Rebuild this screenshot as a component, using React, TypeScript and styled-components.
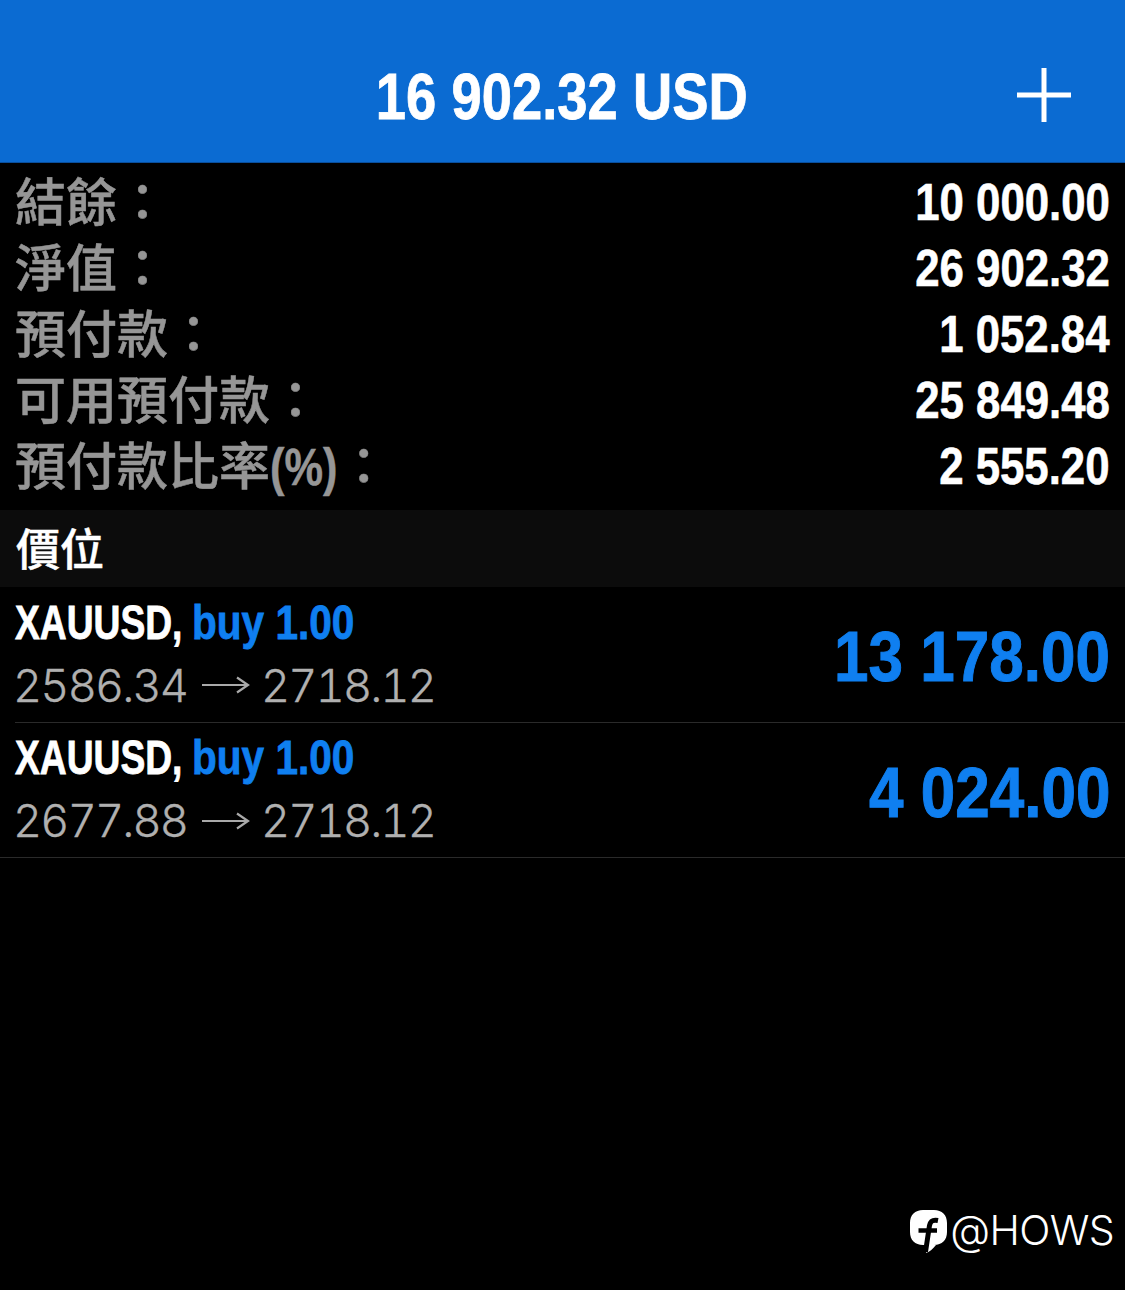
import styled, { createGlobalStyle } from "styled-components";

const GlobalStyle = createGlobalStyle`
    html, body {
        margin: 0;
        padding: 0;
        background: #000000;
    }
`;

const LATIN = `"Liberation Sans", Arial, sans-serif`;
const CJK = `"Noto Sans CJK TC", "Liberation Sans", sans-serif`;
const LIGHT = `Inter, "Liberation Sans", sans-serif`;

const stats = [
    { label: "結餘：", value: "10 000.00" },
    { label: "淨值：", value: "26 902.32" },
    { label: "預付款：", value: "1 052.84" },
    { label: "可用預付款：", value: "25 849.48" },
    { label: "預付款比率", suffix: "(%)", tail: "：", value: "2 555.20" },
];

const positions = [
    { open: "2586.34", close: "2718.12", profit: "13 178.00", flush: false },
    { open: "2677.88", close: "2718.12", profit: "4 024.00", flush: true },
];

const PlusIcon = () => (
    <svg width="56" height="56" viewBox="0 0 56 56" fill="none">
        <path d="M28 1V55M1 28H55" stroke="#FFFFFF" strokeWidth="5" />
    </svg>
);

const FacebookBubble = () => (
    <svg width="40" height="46" viewBox="0 0 40 46" fill="none">
        <path
            d="M14 1H25C33 1 38 6 38 14V23C38 31 33 36 25 36H27C24 40 20 43 17 44L18.5 36H14C6 36 1 31 1 23V14C1 6 6 1 14 1Z"
            fill="#FFFFFF"
        />
        <path d="M29 11.5C24 10.5 21.5 12 20.5 16.5L16.5 43" stroke="#000000" strokeWidth="5" />
        <path d="M9.5 21.5H28" stroke="#000000" strokeWidth="4.5" />
    </svg>
);

export default function App() {
    return (
        <>
            <GlobalStyle />
            <Page>
                <Header>
                    <Title>16 902.32 USD</Title>
                    <AddButton>
                        <PlusIcon />
                    </AddButton>
                </Header>
                <Stats>
                    {stats.map((s) => (
                        <StatRow key={s.value}>
                            <StatLabel>
                                {s.label}
                                {s.suffix && <Percent>{s.suffix}</Percent>}
                                {s.tail}
                            </StatLabel>
                            <StatValue>{s.value}</StatValue>
                        </StatRow>
                    ))}
                </Stats>
                <SectionHead>價位</SectionHead>
                {positions.map((p) => (
                    <PositionRow key={p.open} $flush={p.flush}>
                        <PositionInfo>
                            <PositionTitle>
                                <Symbol>XAUUSD,</Symbol>
                                <Side>buy 1.00</Side>
                            </PositionTitle>
                            <Prices>
                                <PriceText>{p.open}</PriceText>
                                <Arrow viewBox="0 0 48 20" width="48" height="20" fill="none">
                                    <path d="M0 10H46M35 2.5L46 10L35 17.5" stroke="#A9A9A9" strokeWidth="2.2" />
                                </Arrow>
                                <PriceText>{p.close}</PriceText>
                            </Prices>
                        </PositionInfo>
                        <Profit>{p.profit}</Profit>
                    </PositionRow>
                ))}
                <Watermark>
                    <FacebookBubble />
                    <Handle>@HOWS</Handle>
                </Watermark>
            </Page>
        </>
    );
}

const Page = styled.div`
    position: relative;
    width: 1125px;
    height: 1290px;
    overflow: hidden;
    background: #000000;
`;

const Header = styled.div`
    position: relative;
    display: flex;
    align-items: center;
    justify-content: center;
    box-sizing: border-box;
    height: 163px;
    padding: 32px 2px 0 0;
    background: #0b6bd2;
    border-bottom: 1px solid #0a4f9c;
`;

const Title = styled.div`
    font-family: ${LATIN};
    font-size: 64px;
    font-weight: 700;
    line-height: 64px;
    color: #ffffff;
    white-space: nowrap;
    transform: scaleX(0.85);
    -webkit-text-stroke: 0.8px #ffffff;
`;

const AddButton = styled.div`
    position: absolute;
    top: 67px;
    left: 1016px;
    display: flex;
`;

const Stats = styled.div`
    display: flex;
    flex-direction: column;
    height: 340px;
    padding: 7px 15px 0 15px;
`;

const StatRow = styled.div`
    display: flex;
    justify-content: space-between;
    align-items: flex-start;
    height: 66px;
`;

const StatLabel = styled.div`
    height: 56px;
    margin-top: 1px;
    font-family: ${CJK};
    font-size: 51px;
    font-weight: 500;
    line-height: 56px;
    color: #969696;
    white-space: nowrap;
    -webkit-text-stroke: 0.5px #969696;
`;

const Percent = styled.span`
    display: inline-block;
    font-family: ${LATIN};
    font-weight: 700;
    margin-right: -11px;
    transform: scaleX(0.85);
    transform-origin: left center;
`;

const StatValue = styled.div`
    font-family: ${LATIN};
    font-size: 51px;
    font-weight: 700;
    line-height: 66px;
    color: #ffffff;
    white-space: nowrap;
    transform: scaleX(0.858);
    transform-origin: right center;
    -webkit-text-stroke: 0.6px #ffffff;
`;

const SectionHead = styled.div`
    display: flex;
    align-items: center;
    height: 77px;
    padding: 0 0 4px 16px;
    box-sizing: border-box;
    background: #0c0c0c;
    font-family: ${CJK};
    font-size: 44px;
    font-weight: 500;
    color: #ffffff;
    -webkit-text-stroke: 0.5px #ffffff;
`;

const PositionRow = styled.div<{ $flush: boolean }>`
    display: flex;
    justify-content: space-between;
    align-items: center;
    box-sizing: border-box;
    height: 135.5px;
    margin-left: ${({ $flush }) => ($flush ? "0" : "15px")};
    padding-left: ${({ $flush }) => ($flush ? "15px" : "0")};
    padding-right: 15px;
    border-bottom: 1px solid #2a2a2a;
`;

const PositionInfo = styled.div`
    display: flex;
    flex-direction: column;
    margin-top: -4px;
`;

const PositionTitle = styled.div`
    display: flex;
    gap: 9px;
    height: 66px;
    align-items: center;
    font-family: ${LATIN};
    font-size: 48px;
    font-weight: 700;
    white-space: nowrap;
`;

const Symbol = styled.span`
    display: inline-block;
    width: 168px;
    color: #ffffff;
    transform: scaleX(0.775);
    transform-origin: left center;
    -webkit-text-stroke: 0.8px #ffffff;
`;

const Side = styled.span`
    display: inline-block;
    color: #0f7ff0;
    transform: scaleX(0.845);
    transform-origin: left center;
    -webkit-text-stroke: 0.8px #0f7ff0;
`;

const Prices = styled.div`
    display: flex;
    align-items: center;
    height: 60px;
    margin-left: -2px;
`;

const PriceText = styled.span`
    width: 172px;
    font-family: ${LIGHT};
    font-size: 45px;
    font-weight: 300;
    font-variant-numeric: tabular-nums;
    letter-spacing: -1.8px;
    color: #b0b0b0;
    white-space: nowrap;
    -webkit-text-stroke: 0.3px #b0b0b0;
`;

const Arrow = styled.svg`
    margin: 0 11px 0 17px;
`;

const Profit = styled.div`
    margin-top: 5px;
    font-family: ${LATIN};
    font-size: 71px;
    font-weight: 700;
    color: #0f7ff0;
    white-space: nowrap;
    transform: scaleX(0.873);
    transform-origin: right center;
    -webkit-text-stroke: 1px #0f7ff0;
`;

const Watermark = styled.div`
    position: absolute;
    top: 1209px;
    right: 11px;
    display: flex;
    align-items: flex-start;
    gap: 1px;
`;

const Handle = styled.span`
    font-family: ${LIGHT};
    font-size: 41px;
    font-weight: 300;
    line-height: 42px;
    letter-spacing: -0.6px;
    color: #ffffff;
`;
